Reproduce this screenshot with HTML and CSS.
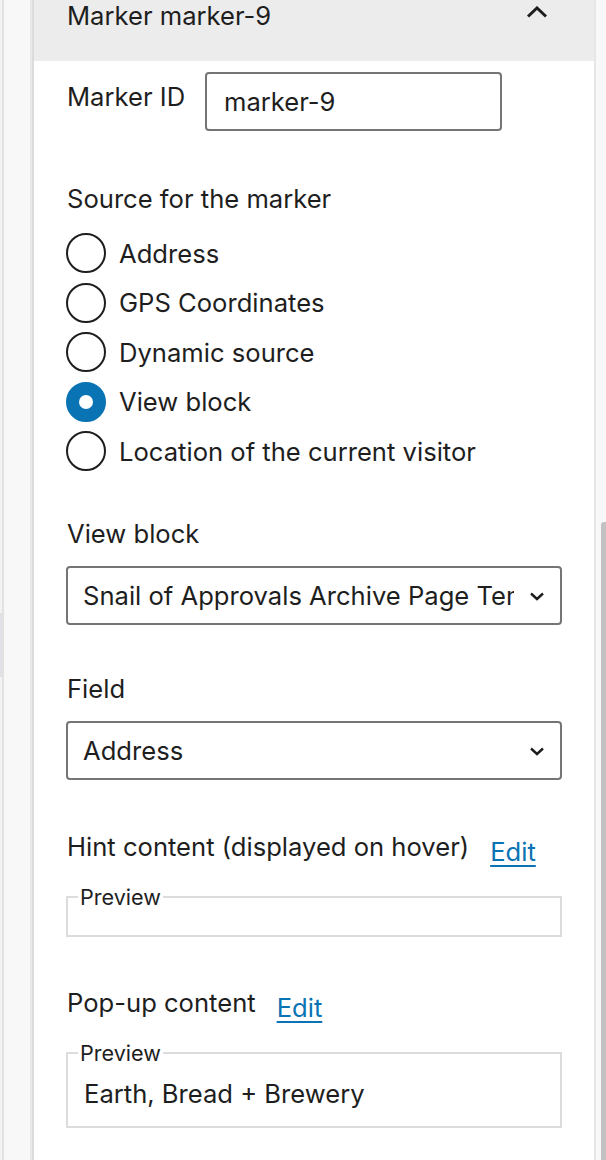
FILE: index.html
```html
<!DOCTYPE html>
<html lang="en">
<head>
  <meta charset="UTF-8">
  <title>Marker settings</title>
  <link rel="stylesheet" href="styles.css">
</head>
<body>

  <div class="screen">
    <div class="edge"><span class="edge-mark"></span></div>
    <div class="rail"></div>

    <section class="panel">
      <header class="panel-head">
        <h2>Marker marker-9</h2>
        <svg class="chevron-up" width="22" height="12" viewBox="0 0 22 12">
          <path d="M2 10.5 L11 2 L20 10.5" fill="none" stroke="#1e1e1e" stroke-width="3"/>
        </svg>
      </header>

      <div class="panel-body">
        <div class="id-row">
          <label class="id-label" for="marker-id">Marker ID</label>
          <input class="text-input" id="marker-id" type="text" value="marker-9">
        </div>

        <div class="source">
          <div class="field-label">Source for the marker</div>
          <div class="radios">
            <label class="radio"><input type="radio" name="source"><span>Address</span></label>
            <label class="radio"><input type="radio" name="source"><span>GPS Coordinates</span></label>
            <label class="radio"><input type="radio" name="source"><span>Dynamic source</span></label>
            <label class="radio"><input type="radio" name="source" checked><span>View block</span></label>
            <label class="radio"><input type="radio" name="source"><span>Location of the current visitor</span></label>
          </div>
        </div>

        <div class="group group-view">
          <div class="field-label">View block</div>
          <div class="select">
            <span class="select-value">Snail of Approvals Archive Page Template</span>
            <svg class="chevron-down" width="16" height="10" viewBox="0 0 16 10">
              <path d="M2 2.5 L8 8 L14 2.5" fill="none" stroke="#1e1e1e" stroke-width="2.4"/>
            </svg>
          </div>
        </div>

        <div class="group group-field">
          <div class="field-label">Field</div>
          <div class="select">
            <span class="select-value">Address</span>
            <svg class="chevron-down" width="16" height="10" viewBox="0 0 16 10">
              <path d="M2 2.5 L8 8 L14 2.5" fill="none" stroke="#1e1e1e" stroke-width="2.4"/>
            </svg>
          </div>
        </div>

        <div class="group group-hint">
          <div class="label-row">
            <span class="field-label">Hint content (displayed on hover)</span>
            <a class="edit-link" href="#">Edit</a>
          </div>
          <fieldset class="preview preview-empty">
            <legend>Preview</legend>
            <div class="preview-text"></div>
          </fieldset>
        </div>

        <div class="group group-popup">
          <div class="label-row">
            <span class="field-label">Pop-up content</span>
            <a class="edit-link" href="#">Edit</a>
          </div>
          <fieldset class="preview">
            <legend>Preview</legend>
            <div class="preview-text">Earth, Bread + Brewery</div>
          </fieldset>
        </div>
      </div>
    </section>

    <div class="scroll-track"><span class="scroll-thumb"></span></div>
  </div>

</body>
</html>
```

FILE: styles.css
```css
:root {
  --text: #1e1e1e;
  --accent: #0a73b3;
  --control-border: #757575;
  --soft-border: #dcdcde;
  --header-bg: #ececec;
  --rail-bg: #f8f8f8;
}

html, body {
  margin: 0;
  height: 100%;
}

body {
  font-family: Inter, "Noto Sans", "Liberation Sans", sans-serif;
  font-size: 25.6px;
  color: var(--text);
  background: #ffffff;
  overflow: hidden;
}

.screen {
  display: flex;
  height: 1160px;
}

/* left editor edge */
.edge {
  width: 2px;
  background: #f3f3f3;
  display: flex;
  flex-direction: column;
}

.edge-mark {
  display: block;
  margin-top: 613px;
  height: 64px;
  background: #e0e0e6;
}

.rail {
  width: 26px;
  background: var(--rail-bg);
  border-left: 2px solid #e2e2e2;
  border-right: 2px solid #e8e8e8;
  box-shadow: 2px 0 0 #dcdcdc;
  margin-right: 2px;
}

/* the marker panel */
.panel {
  width: 560px;
  background: #ffffff;
}

.panel-head {
  height: 61px;
  background: var(--header-bg);
  display: flex;
  align-items: flex-start;
  justify-content: space-between;
  padding: 0 46px 0 33px;
}

.panel-head h2 {
  margin: 0;
  font-size: 25.6px;
  font-weight: 400;
  line-height: 32px;
}

.chevron-up {
  margin-top: 6px;
}

.panel-body {
  padding: 11px 32px 0 32px;
}

.id-row {
  display: flex;
  align-items: flex-start;
}

.id-label {
  width: 138px;
  line-height: 32px;
  margin-top: 9px;
  padding-left: 1px;
  white-space: nowrap;
}

.text-input {
  width: 297px;
  height: 59px;
  box-sizing: border-box;
  border: 2px solid var(--control-border);
  border-radius: 4px;
  padding: 0 17px;
  font: inherit;
  color: var(--text);
  outline: none;
}

.field-label {
  display: block;
  line-height: 32px;
  padding-left: 1px;
}

.source {
  margin-top: 52px;
}

.radios {
  display: flex;
  flex-direction: column;
  gap: 9.5px;
  margin-top: 18px;
}

.radio {
  display: flex;
  align-items: center;
  gap: 13px;
  height: 40px;
}

.radio input {
  appearance: none;
  margin: 0;
  width: 40px;
  height: 40px;
  box-sizing: border-box;
  border: 2px solid var(--text);
  border-radius: 50%;
  background: #ffffff;
  display: grid;
  place-items: center;
}

.radio input:checked {
  border-color: var(--accent);
  background: var(--accent);
}

.radio input:checked::after {
  content: "";
  width: 14px;
  height: 14px;
  border-radius: 50%;
  background: #ffffff;
}

.group-view {
  margin-top: 47px;
}

.group-field {
  margin-top: 48px;
}

.select {
  margin-top: 16px;
  height: 59px;
  box-sizing: border-box;
  border: 2px solid var(--control-border);
  border-radius: 4px;
  display: flex;
  align-items: center;
  padding: 0 15px 0 15px;
}

.select-value {
  flex: 1;
  overflow: hidden;
  white-space: nowrap;
  margin-right: 15px;
}

.group-hint {
  margin-top: 51px;
}

.group-popup {
  margin-top: 50px;
}

.label-row {
  display: flex;
  align-items: flex-start;
  gap: 21px;
}

.edit-link {
  color: var(--accent);
  text-decoration: underline;
  text-underline-offset: 4px;
  text-decoration-thickness: 2px;
  line-height: 32px;
  margin-top: 5px;
}

.preview {
  margin: 17px 0 0 0;
  padding: 0 10px 0 10px;
  border: 2px solid var(--soft-border);
}

.preview legend {
  font-size: 21.6px;
  line-height: 24px;
  padding: 0 2px;
}

.preview-text {
  padding: 13px 0 16px 6px;
  line-height: 32px;
}

.preview-empty .preview-text {
  padding: 0;
  height: 26px;
}

.scroll-track {
  width: 10px;
  background: var(--rail-bg);
  border-left: 2px solid #e6e6e6;
  display: flex;
  flex-direction: column;
  align-items: flex-end;
}

.scroll-thumb {
  display: block;
  width: 5px;
  margin-top: 522px;
  flex: 1;
  background: #c2c2c2;
  border-radius: 3px 0 0 0;
}
```
